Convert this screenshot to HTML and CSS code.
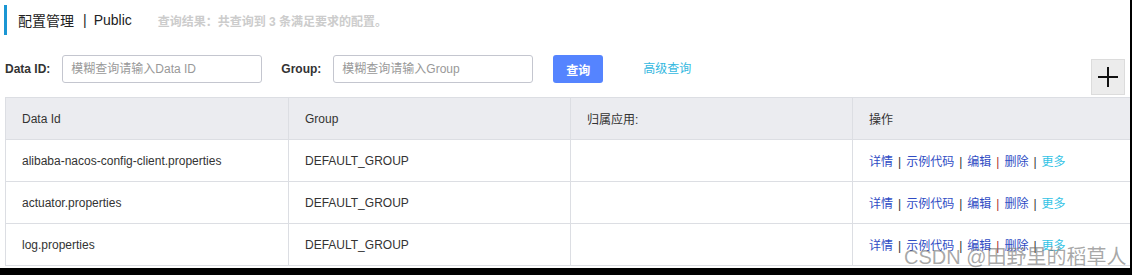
FILE: index.html
```html
<!DOCTYPE html>
<html lang="zh">

<head>
    <meta charset="UTF-8">
    <title>配置管理 - Public</title>
    <link rel="stylesheet" href="styles.css">
</head>

<body>
    <div class="page">
        <div class="title-bar">
            <span class="title">配置管理</span>
            <span class="title-sep">|</span>
            <span class="title">Public</span>
            <span class="query-info">查询结果：共查询到 3 条满足要求的配置。</span>
        </div>

        <div class="search-row">
            <label class="search-label">Data ID:</label>
            <input class="search-input" type="text" placeholder="模糊查询请输入Data ID">
            <label class="search-label group-label">Group:</label>
            <input class="search-input" type="text" placeholder="模糊查询请输入Group">
            <button class="query-btn">查询</button>
            <a class="advanced-link" href="#">高级查询</a>
            <button class="add-btn">
                <svg width="22" height="22" viewBox="0 0 22 22">
                    <path d="M11 1V21M1 11H21" stroke="#111" stroke-width="2" fill="none" />
                </svg>
            </button>
        </div>

        <table class="config-table">
            <thead>
                <tr>
                    <th class="col-id">Data Id</th>
                    <th class="col-group">Group</th>
                    <th class="col-app">归属应用:</th>
                    <th>操作</th>
                </tr>
            </thead>
            <tbody>
                <tr>
                    <td>alibaba-nacos-config-client.properties</td>
                    <td>DEFAULT_GROUP</td>
                    <td></td>
                    <td class="actions">
                        <a href="#">详情</a><span class="sep">|</span><a href="#">示例代码</a><span class="sep">|</span><a href="#">编辑</a><span class="sep red">|</span><a href="#">删除</a><span class="sep">|</span><a class="more" href="#">更多</a>
                    </td>
                </tr>
                <tr>
                    <td>actuator.properties</td>
                    <td>DEFAULT_GROUP</td>
                    <td></td>
                    <td class="actions">
                        <a href="#">详情</a><span class="sep">|</span><a href="#">示例代码</a><span class="sep">|</span><a href="#">编辑</a><span class="sep red">|</span><a href="#">删除</a><span class="sep">|</span><a class="more" href="#">更多</a>
                    </td>
                </tr>
                <tr>
                    <td>log.properties</td>
                    <td>DEFAULT_GROUP</td>
                    <td></td>
                    <td class="actions">
                        <a href="#">详情</a><span class="sep">|</span><a href="#">示例代码</a><span class="sep">|</span><a href="#">编辑</a><span class="sep red">|</span><a href="#">删除</a><span class="sep">|</span><a class="more" href="#">更多</a>
                    </td>
                </tr>
            </tbody>
        </table>

        <div class="watermark">CSDN @田野里的稻草人</div>
    </div>
</body>

</html>
```

FILE: styles.css
```css
body {
    margin: 0;
    padding: 0;
    background: #000;
    font-family: "Liberation Sans", "Noto Sans CJK SC", sans-serif;
    color: #333;
}

.page {
    position: relative;
    width: 1130px;
    height: 268px;
    padding-top: 5px;
    box-sizing: border-box;
    background: #fff;
    overflow: hidden;
}

.title-bar {
    display: flex;
    align-items: center;
    height: 30px;
    margin-left: 4px;
    padding-left: 11px;
    border-left: 3px solid #1b96d3;
}

.title {
    font-size: 14px;
    color: #222;
}

.title-sep {
    font-size: 14px;
    margin: 0 7px 0 9px;
    color: #222;
}

.query-info {
    margin-left: 26px;
    font-size: 12px;
    font-weight: bold;
    color: #ccc;
}

.search-row {
    display: flex;
    align-items: flex-start;
    margin-top: 20px;
    padding-left: 5px;
}

.search-label {
    line-height: 28px;
    font-size: 12px;
    font-weight: bold;
    color: #333;
}

.group-label {
    margin-left: 19px;
}

.search-input {
    width: 200px;
    height: 28px;
    box-sizing: border-box;
    margin-left: 12px;
    padding: 0 8px;
    font-family: inherit;
    font-size: 12px;
    color: #333;
    border: 1px solid #c4c6cf;
    border-radius: 3px;
    outline: none;
}

.search-input::placeholder {
    color: #999;
}

.query-btn {
    width: 50px;
    height: 28px;
    margin-left: 20px;
    padding: 0;
    font-family: inherit;
    font-size: 12px;
    font-weight: bold;
    color: #fff;
    background: #5584ff;
    border: none;
    border-radius: 3px;
}

.advanced-link {
    margin-left: 40px;
    line-height: 28px;
    font-size: 12px;
    color: #33b8e0;
    text-decoration: none;
}

.add-btn {
    display: flex;
    align-items: center;
    justify-content: center;
    width: 34px;
    height: 36px;
    margin: 4px 5px 0 auto;
    padding: 0;
    background: #ececec;
    border: 1px solid #dcdcdc;
}

.config-table {
    width: 1128px;
    margin: 2px 0 0 5px;
    border-collapse: collapse;
    table-layout: fixed;
    font-size: 12px;
}

.config-table th,
.config-table td {
    height: 41px;
    padding: 0 0 0 16px;
    text-align: left;
    font-weight: normal;
    color: #333;
    border: 1px solid #dcdee3;
    white-space: nowrap;
}

.config-table th {
    background: #ebecf0;
}

.col-id {
    width: 266px;
}

.col-group,
.col-app {
    width: 265px;
}

.actions a {
    color: #2f4cc4;
    text-decoration: none;
}

.actions a.more {
    color: #33c3e5;
}

.sep {
    margin: 0 5px;
    color: #333;
}

.sep.red {
    color: #a33;
}

.watermark {
    position: absolute;
    left: 904px;
    top: 241px;
    font-size: 20px;
    color: rgba(110, 110, 110, 0.6);
    white-space: nowrap;
}
```
